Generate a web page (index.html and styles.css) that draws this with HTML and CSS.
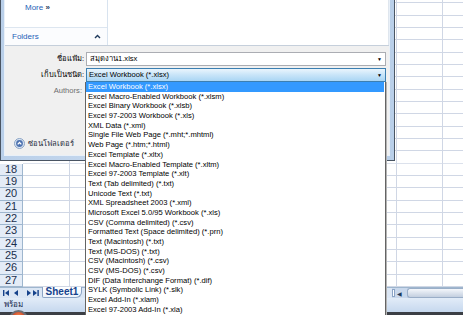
FILE: index.html
```html
<!DOCTYPE html>
<html lang="th">
<head>
  <meta charset="UTF-8" />
  <title>บันทึกเป็น</title>
  <link rel="stylesheet" href="styles.css">
</head>
<body>

<div class="screen">

  <!-- Excel behind the dialog -->
  <div class="excel">
    <div class="sheet">
      <!-- rows 1-17 sit under the dialog, only their grid shows -->
      <div class="sheet-top"></div>
      <div class="row"><span class="rh">18</span><span class="cells"></span></div>
      <div class="row"><span class="rh">19</span><span class="cells"></span></div>
      <div class="row"><span class="rh">20</span><span class="cells"></span></div>
      <div class="row"><span class="rh">21</span><span class="cells"></span></div>
      <div class="row"><span class="rh">22</span><span class="cells"></span></div>
      <div class="row"><span class="rh">23</span><span class="cells"></span></div>
      <div class="row"><span class="rh">24</span><span class="cells"></span></div>
      <div class="row"><span class="rh">25</span><span class="cells"></span></div>
      <div class="row"><span class="rh">26</span><span class="cells"></span></div>
      <div class="row"><span class="rh">27</span><span class="cells"></span></div>
    </div>

    <div class="tabbar">
      <div class="tabnav">
        <svg width="38" height="8" viewBox="0 0 38 8">
          <rect x="1" y="1" width="1.4" height="6" fill="#15428b"/>
          <polygon points="3,4 7,1 7,7" fill="#15428b"/>
          <polygon points="12,4 16,1 16,7" fill="#15428b"/>
          <polygon points="25,1 29,4 25,7" fill="#15428b"/>
          <polygon points="31,1 35,4 31,7" fill="#15428b"/>
          <rect x="35.4" y="1" width="1.4" height="6" fill="#15428b"/>
        </svg>
      </div>
      <div class="tab">Sheet1</div>
      <div class="tabfill"></div>
      <div class="hscroll">
        <span class="split"></span>
        <span class="sarrow">&#9664;</span>
        <span class="thumb"></span>
      </div>
    </div>

    <div class="status">พร้อม</div>
    <div class="taskbar"><span class="orb"></span></div>
  </div>

  <!-- Save As dialog -->
  <div class="dialog">
    <div class="dlg-body">
      <div class="browser">
        <div class="nav">
          <div class="more"><span class="link">More</span> <b>&raquo;</b></div>
          <div class="folders">
            <span class="link">Folders</span>
            <svg width="7" height="5" viewBox="0 0 7 5"><polyline points="1,4 3.5,1.5 6,4" fill="none" stroke="#1e395b" stroke-width="1.4"/></svg>
          </div>
        </div>
        <div class="files"></div>
      </div>

      <div class="form">
        <div class="fields">
          <label>ชื่อแฟ้ม:</label>
          <div class="field">สมุดงาน1.xlsx<span class="arrow">&#9660;</span></div>
          <label>เก็บเป็นชนิด:</label>
          <div class="field focused">Excel Workbook (*.xlsx)<span class="arrow">&#9660;</span></div>
          <label class="muted">Authors:</label>
          <div></div>
        </div>
        <div class="hide-folders">
          <svg width="11" height="11" viewBox="0 0 11 11">
            <circle cx="5.5" cy="5.5" r="5" fill="#dbe6f3" stroke="#8aa2c4"/>
            <circle cx="5.5" cy="5.5" r="3.4" fill="#4d72b0"/>
            <polyline points="3.7,6.4 5.5,4.5 7.3,6.4" fill="none" stroke="#fff" stroke-width="1.3"/>
          </svg>
          <span>ซ่อนโฟลเดอร์</span>
        </div>
      </div>
    </div>
  </div>

  <!-- open "save as type" list -->
  <ul class="typelist">
    <li class="sel">Excel Workbook (*.xlsx)</li>
    <li>Excel Macro-Enabled Workbook (*.xlsm)</li>
    <li>Excel Binary Workbook (*.xlsb)</li>
    <li>Excel 97-2003 Workbook (*.xls)</li>
    <li>XML Data (*.xml)</li>
    <li>Single File Web Page (*.mht;*.mhtml)</li>
    <li>Web Page (*.htm;*.html)</li>
    <li>Excel Template (*.xltx)</li>
    <li>Excel Macro-Enabled Template (*.xltm)</li>
    <li>Excel 97-2003 Template (*.xlt)</li>
    <li>Text (Tab delimited) (*.txt)</li>
    <li>Unicode Text (*.txt)</li>
    <li>XML Spreadsheet 2003 (*.xml)</li>
    <li>Microsoft Excel 5.0/95 Workbook (*.xls)</li>
    <li>CSV (Comma delimited) (*.csv)</li>
    <li>Formatted Text (Space delimited) (*.prn)</li>
    <li>Text (Macintosh) (*.txt)</li>
    <li>Text (MS-DOS) (*.txt)</li>
    <li>CSV (Macintosh) (*.csv)</li>
    <li>CSV (MS-DOS) (*.csv)</li>
    <li>DIF (Data Interchange Format) (*.dif)</li>
    <li>SYLK (Symbolic Link) (*.slk)</li>
    <li>Excel Add-In (*.xlam)</li>
    <li>Excel 97-2003 Add-In (*.xla)</li>
  </ul>

</div>

</body>
</html>
```

FILE: styles.css
```css
body {
  margin: 0;
  font-family: 'Liberation Sans', 'DejaVu Sans', sans-serif;
  color: #000;
  background: #fff;
}

.screen {
  position: relative;
  width: 463px;
  height: 315px;
  overflow: hidden;
}

/* Excel window */
.excel {
  display: flex;
  flex-direction: column;
  height: 315px;
}

.sheet {
  height: 288px;
  display: flex;
  flex-direction: column;
}

.sheet-top {
  flex: 1;
  margin-left: 23px;
  background:
    repeating-linear-gradient(to top, #d0d7e5 0, #d0d7e5 1px, transparent 1px, transparent 12.33px),
    repeating-linear-gradient(to right, transparent 0, transparent 45.7px, #d0d7e5 45.7px, #d0d7e5 46.7px);
  background-position: left bottom;
}

.row {
  display: flex;
  flex: none;
  height: 12.33px;
  box-sizing: border-box;
}

.rh {
  width: 23px;
  box-sizing: border-box;
  background: #e4ecf7;
  border-right: 1px solid #9eb6ce;
  border-bottom: 1px solid #9eb6ce;
  color: #1b2f4c;
  font-size: 11px;
  line-height: 11px;
  text-align: center;
}

.cells {
  flex: 1;
  border-bottom: 1px solid #d0d7e5;
  background: repeating-linear-gradient(to right, transparent 0, transparent 45.7px, #d0d7e5 45.7px, #d0d7e5 46.7px);
}

.tabbar {
  height: 10px;
  display: flex;
  align-items: stretch;
  background: #dbe6f4;
  border-top: 1px solid #9eb6ce;
}

.tabnav {
  width: 40px;
  display: flex;
  align-items: center;
  padding-left: 2px;
}

.tab {
  width: 38px;
  margin-top: -1px;
  background: linear-gradient(#fff, #eef3fa);
  border: 1px solid #8ba4c6;
  border-top: none;
  border-radius: 0 0 6px 2px;
  color: #15428b;
  font-size: 10px;
  font-weight: bold;
  line-height: 10px;
  text-align: center;
}

.tabfill {
  flex: 1;
}

.hscroll {
  width: 71px;
  display: flex;
  align-items: center;
  gap: 2px;
  background: #c9d8ec;
}

.split {
  width: 3px;
  height: 8px;
  background: #fff;
  border: 1px solid #8ba4c6;
  box-sizing: border-box;
}

.sarrow {
  font-size: 6px;
  color: #1e395b;
}

.thumb {
  flex: 1;
  height: 8px;
  margin-left: 3px;
  border-radius: 3px 0 0 3px;
  background: linear-gradient(#f4f7fb, #c3cfdf);
  border: 1px solid #9aaec8;
  border-right: none;
}

.status {
  height: 14px;
  padding-left: 4px;
  background: linear-gradient(#e2ecf8, #c6d8ee);
  color: #15284b;
  font-size: 8px;
  line-height: 14px;
}

.taskbar {
  position: relative;
  height: 3px;
  background: #3b3f45;
}

.orb {
  position: absolute;
  left: 9px;
  top: -2px;
  width: 15px;
  height: 15px;
  border-radius: 50%;
  border: 2px solid #6b6f75;
  background: radial-gradient(circle at 50% 30%, #f6894a, #b3261c 70%);
}

/* Save As dialog */
.dialog {
  position: absolute;
  left: 0;
  top: 0;
  width: 395px;
  height: 161px;
  box-sizing: border-box;
  border: 1px solid #4a5563;
  border-top: none;
  padding: 0 5px 5px 4px;
  background: linear-gradient(to right, #b9cfe9, #cfdff2 50%, #b9cfe9);
}

.dlg-body {
  height: 100%;
  display: flex;
  flex-direction: column;
  background: #f0f0f0;
  box-shadow: 0 0 0 1px #e9f0f8;
}

.browser {
  height: 45px;
  display: flex;
  border-bottom: 1px solid #c5cfdb;
}

.nav {
  width: 102px;
  display: flex;
  flex-direction: column;
  background: #fff;
  border-right: 1px solid #d8e3ef;
}

.more {
  height: 28px;
  box-sizing: border-box;
  padding: 3px 0 0 20px;
  border-bottom: 1px solid #dde6f0;
  font-size: 8px;
}

.more b {
  color: #1e395b;
}

.link {
  color: #1f5fb8;
}

.folders {
  flex: 1;
  display: flex;
  align-items: center;
  justify-content: space-between;
  padding: 0 6px 0 7px;
  font-size: 8px;
  background: #fbfcfe;
}

.files {
  flex: 1;
  background: #fff;
  border-right: 1px solid #dfe6ee;
}

.form {
  flex: 1;
  display: flex;
  flex-direction: column;
}

.fields {
  display: grid;
  grid-template-columns: 79px 300px;
  grid-auto-rows: 14px;
  column-gap: 2px;
  row-gap: 2px;
  padding-top: 6px;
  font-size: 7.6px;
}

.fields label {
  text-align: right;
  line-height: 14px;
}

.fields label.muted {
  color: #6d6d6d;
  padding-right: 2px;
}

.field {
  position: relative;
  box-sizing: border-box;
  padding-left: 3px;
  background: #fff;
  border: 1px solid #abadb3;
  line-height: 12px;
}

.field.focused {
  padding-left: 2px;
  border-color: #3c7fb1;
  background: linear-gradient(#eaf5fd, #cbe6f9 45%, #a9d5f4);
}

.arrow {
  position: absolute;
  right: 3px;
  top: 0;
  font-size: 5px;
  color: #000;
}

.hide-folders {
  margin-top: auto;
  display: flex;
  align-items: center;
  gap: 3px;
  padding: 0 0 6px 9px;
  font-size: 7.6px;
  color: #1e2b3c;
}

/* dropped-down type list */
.typelist {
  position: absolute;
  left: 85px;
  top: 82px;
  width: 301px;
  height: 240px;
  box-sizing: border-box;
  margin: 0;
  padding: 0 1px 0 0;
  list-style: none;
  background: #fff;
  border-left: 1px solid #646464;
  border-right: 1px solid #646464;
  box-shadow: 1px 0 0 #b4b4b4;
  font-size: 7.6px;
}

.typelist li {
  height: 9.7px;
  line-height: 9.7px;
  padding-left: 2px;
  white-space: nowrap;
}

.typelist li.sel {
  background: #3399ff;
  color: #fff;
}
```
